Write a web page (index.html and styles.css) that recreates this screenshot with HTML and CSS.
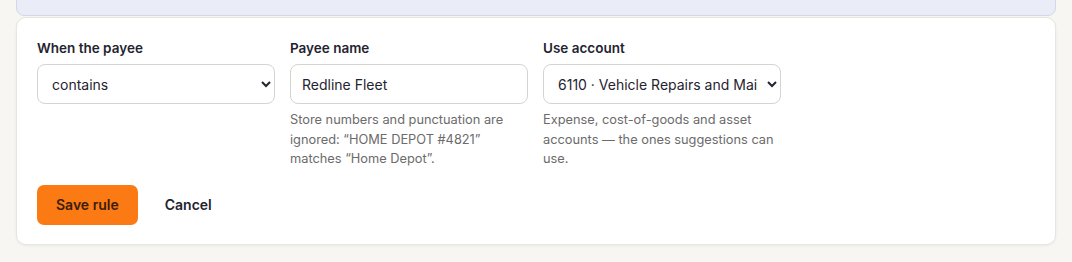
FILE: index.html
```html
<!DOCTYPE html>
<html lang="en">
<head>
    <meta charset="UTF-8">
    <meta name="viewport" content="width=device-width, initial-scale=1.0">
    <title>Payee rules</title>
    <link rel="stylesheet" href="styles.css">
</head>
<body>
    <div class="page">
        <div class="notice">
            Suggestions are learned from how you categorize payees. A rule always applies first and overrides any suggestion for a matching transaction.
        </div>

        <form class="rule-card" onsubmit="return false;">
            <div class="rule-fields">
                <div class="field">
                    <label for="matchType">When the payee</label>
                    <select id="matchType">
                        <option value="contains">contains</option>
                        <option value="equals">is exactly</option>
                        <option value="starts">starts with</option>
                    </select>
                </div>

                <div class="field">
                    <label for="payeeName">Payee name</label>
                    <input type="text" id="payeeName" value="Redline Fleet">
                    <p class="hint">Store numbers and punctuation are ignored: “HOME DEPOT #4821” matches “Home Depot”.</p>
                </div>

                <div class="field">
                    <label for="account">Use account</label>
                    <select id="account">
                        <option value="6110">6110 · Vehicle Repairs and Maintenance</option>
                        <option value="6120">6120 · Fuel</option>
                        <option value="5000">5000 · Cost of Goods Sold</option>
                    </select>
                    <p class="hint">Expense, cost-of-goods and asset accounts — the ones suggestions can use.</p>
                </div>
            </div>

            <div class="rule-actions">
                <button type="submit" class="btn-save">Save rule</button>
                <button type="button" class="btn-cancel">Cancel</button>
            </div>
        </form>
    </div>
</body>
</html>
```

FILE: styles.css
```css
body {
    font-family: Inter, "Noto Sans", Arial, sans-serif;
    margin: 0;
    padding: 0;
    background-color: #f7f6f2;
    color: #1f2430;
}
.page {
    padding: 0 16px 16px 16px;
    margin-top: -34px;
}
.notice {
    background-color: #eaedf8;
    border: 1px solid #d3d7e8;
    border-radius: 8px;
    padding: 12px 20px 16px 20px;
    font-size: 13px;
    line-height: 20px;
    color: #4a4f63;
    white-space: nowrap;
    overflow: hidden;
}
.rule-card {
    margin-top: 1px;
    background-color: white;
    border: 1px solid #e7e6e1;
    border-radius: 10px;
    box-shadow: 0 1px 3px rgba(0, 0, 0, 0.06);
    padding: 20px 20px 19px 20px;
}
.rule-fields {
    display: grid;
    grid-template-columns: repeat(3, 238px);
    gap: 15px;
}
.field label {
    display: block;
    font-size: 13.5px;
    font-weight: 600;
    line-height: 20px;
    margin-bottom: 6px;
    color: #1f2430;
}
.field select, .field input {
    width: 100%;
    height: 40px;
    box-sizing: border-box;
    border: 1px solid #d4d4d0;
    border-radius: 8px;
    background-color: white;
    font-family: inherit;
    font-size: 14px;
    color: #1f2430;
}
.field select {
    padding: 0 6px 0 10px;
}
.field input {
    padding: 0 11px;
}
.hint {
    margin: 6px 0 0 0;
    font-size: 12.8px;
    line-height: 19.5px;
    color: #6b6b6b;
}
.rule-actions {
    display: flex;
    align-items: center;
    gap: 11px;
    margin-top: 16px;
}
.rule-actions button {
    height: 40px;
    border: none;
    border-radius: 7px;
    font-family: inherit;
    font-size: 14px;
    font-weight: 600;
    cursor: pointer;
}
.btn-save {
    background-color: #fb7a14;
    color: #3b1d0b;
    padding: 0 19px;
}
.btn-cancel {
    background: none;
    color: #1f2430;
    padding: 0 16px;
}
```
